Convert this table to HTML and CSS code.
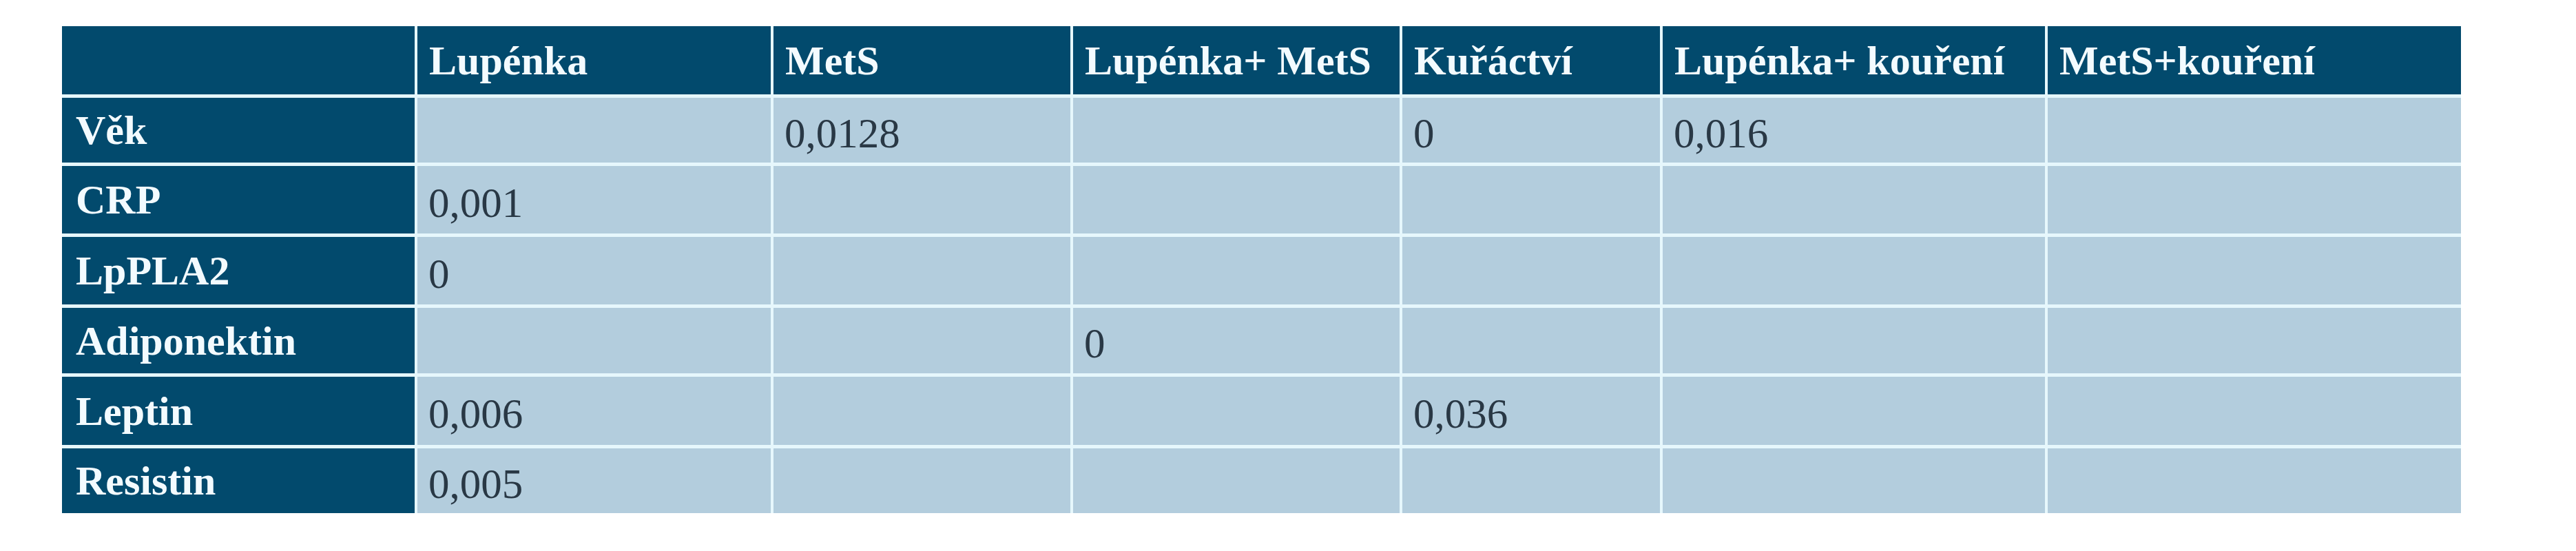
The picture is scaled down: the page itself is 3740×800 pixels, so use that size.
FILE: index.html
```html
<!DOCTYPE html>
<html lang="cs">
<head>
<meta charset="utf-8">
<title>Tabulka</title>
<link rel="stylesheet" href="styles.css">
</head>
<body>
<div class="page">
  <div class="grid">
    <div class="cell head"></div>
    <div class="cell head">Lupénka</div>
    <div class="cell head">MetS</div>
    <div class="cell head">Lupénka+ MetS</div>
    <div class="cell head">Kuřáctví</div>
    <div class="cell head">Lupénka+ kouření</div>
    <div class="cell head">MetS+kouření</div>

    <div class="cell label">Věk</div>
    <div class="cell val"></div>
    <div class="cell val">0,0128</div>
    <div class="cell val"></div>
    <div class="cell val">0</div>
    <div class="cell val">0,016</div>
    <div class="cell val"></div>

    <div class="cell label">CRP</div>
    <div class="cell val">0,001</div>
    <div class="cell val"></div>
    <div class="cell val"></div>
    <div class="cell val"></div>
    <div class="cell val"></div>
    <div class="cell val"></div>

    <div class="cell label">LpPLA2</div>
    <div class="cell val">0</div>
    <div class="cell val"></div>
    <div class="cell val"></div>
    <div class="cell val"></div>
    <div class="cell val"></div>
    <div class="cell val"></div>

    <div class="cell label">Adiponektin</div>
    <div class="cell val"></div>
    <div class="cell val"></div>
    <div class="cell val">0</div>
    <div class="cell val"></div>
    <div class="cell val"></div>
    <div class="cell val"></div>

    <div class="cell label">Leptin</div>
    <div class="cell val">0,006</div>
    <div class="cell val"></div>
    <div class="cell val"></div>
    <div class="cell val">0,036</div>
    <div class="cell val"></div>
    <div class="cell val"></div>

    <div class="cell label">Resistin</div>
    <div class="cell val">0,005</div>
    <div class="cell val"></div>
    <div class="cell val"></div>
    <div class="cell val"></div>
    <div class="cell val"></div>
    <div class="cell val"></div>
  </div>
</div>
</body>
</html>
```

FILE: styles.css
```css
html, body {
  margin: 0;
  padding: 0;
  background: #ffffff;
}

.page {
  padding: 38px 0 0 90px;
}

.grid {
  display: grid;
  width: max-content;
  grid-template-columns: 512px 513px 431px 474px 374px 555px 600px;
  grid-template-rows: 99px 94px 98px 98px 95px 99px 94px;
  column-gap: 4px;
  row-gap: 5px;
  background: #e6f7fc;
  font-family: "Liberation Serif", "Times New Roman", serif;
}

.cell {
  display: flex;
  align-items: center;
  padding-left: 17px;
  white-space: nowrap;
  font-size: 60px;
  line-height: 1;
}

.head,
.label {
  background: #024a6d;
  color: #f3fbff;
  font-weight: bold;
}

.label {
  padding-left: 20px;
}

.val {
  background: #b3cddd;
  color: #293845;
  font-weight: normal;
  font-size: 61px;
  padding-left: 16px;
  padding-top: 8px;
}
```
